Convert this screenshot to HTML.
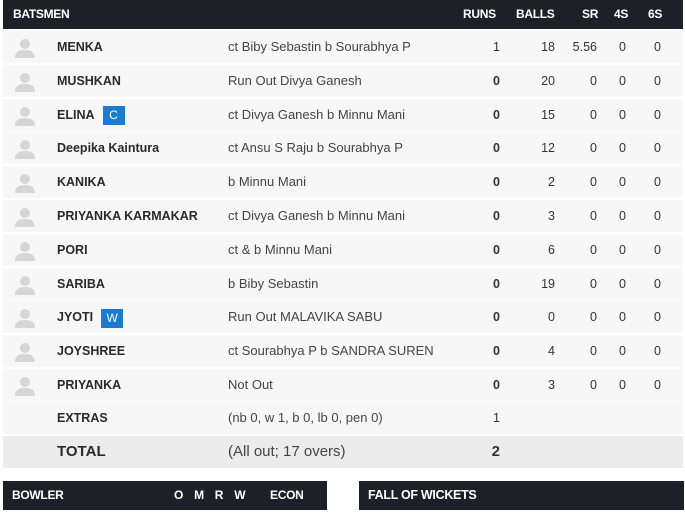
<!DOCTYPE html>
<html><head><style>
body{margin:0;width:685px;height:514px;background:#fff;font-family:"Liberation Sans",sans-serif;position:relative;overflow:hidden}
.hd{position:absolute;background:#1d2026;color:#fff;font-weight:bold;font-size:12px;height:29px;line-height:29px;letter-spacing:-0.3px}
.row{position:absolute;left:3px;width:680px;height:32px;background:#f7f7f7;font-size:12.5px;color:#333}
.row span{position:absolute;top:0;line-height:32px}
.nm{left:54px;font-weight:bold;color:#2a2a2a}
.ds{left:225px;color:#444;font-size:13px}
.r{text-align:right}
.badge{display:inline-block;color:#fff;background:#1a7bd1;font-weight:normal;font-size:12px;width:22px;height:19px;line-height:19px;text-align:center;margin-left:8px;vertical-align:middle}
.av{position:absolute;left:11px;top:7px;width:22px;height:20px}
</style></head><body>
<div class="hd" style="left:3px;top:0;width:680px">
<span style="position:absolute;left:10px">BATSMEN</span>
<span style="position:absolute;left:460px">RUNS</span>
<span style="position:absolute;left:513px">BALLS</span>
<span style="position:absolute;left:579px">SR</span>
<span style="position:absolute;left:611px">4S</span>
<span style="position:absolute;left:645px">6S</span>
</div>
<div id="rows"></div>
<script>
var d=[["MENKA","ct Biby Sebastin b Sourabhya P","1","18","5.56"],["MUSHKAN","Run Out Divya Ganesh","0","20","0"],["ELINA|C","ct Divya Ganesh b Minnu Mani","0","15","0"],["Deepika Kaintura","ct Ansu S Raju b Sourabhya P","0","12","0"],["KANIKA","b Minnu Mani","0","2","0"],["PRIYANKA KARMAKAR","ct Divya Ganesh b Minnu Mani","0","3","0"],["PORI","ct &amp; b Minnu Mani","0","6","0"],["SARIBA","b Biby Sebastin","0","19","0"],["JYOTI|W","Run Out MALAVIKA SABU","0","0","0"],["JOYSHREE","ct Sourabhya P b SANDRA SUREN","0","4","0"],["PRIYANKA","Not Out","0","3","0"]];
var h="";
for(var i=0;i<d.length;i++){var t=31+i*33.8;var n=d[i][0].split("|");
var nm=n[0]+(n[1]?'<span class="badge" style="position:static;line-height:19px">'+n[1]+'</span>':'');
h+='<div class="row" style="top:'+t+'px"><svg class="av" viewBox="0 0 22 20"><circle cx="11" cy="6" r="5" fill="#d6d6d6"/><path d="M1 20c0-6 4-8 10-8s10 2 10 8z" fill="#d6d6d6"/></svg>'+
'<span class="nm">'+nm+'</span><span class="ds">'+d[i][1]+'</span>'+
'<span class="r" style="left:470px;width:27px;font-weight:'+(d[i][2]=="0"?"bold":"normal")+'">'+d[i][2]+'</span>'+
'<span class="r" style="left:520px;width:32px">'+d[i][3]+'</span>'+
'<span class="r" style="left:560px;width:34px">'+d[i][4]+'</span>'+
'<span class="r" style="left:600px;width:23px">0</span>'+
'<span class="r" style="left:640px;width:18px">0</span></div>';}
document.getElementById("rows").innerHTML=h;
</script>
<div class="row" style="top:402px;font-size:12.5px"><span class="nm" style="left:54px">EXTRAS</span><span class="ds">(nb 0, w 1, b 0, lb 0, pen 0)</span><span class="r" style="left:470px;width:27px">1</span></div>
<div class="row" style="top:436px;background:#ececec;font-size:15px"><span class="nm" style="left:54px">TOTAL</span><span class="ds" style="font-size:15px">(All out; 17 overs)</span><span class="r" style="left:470px;width:27px;font-weight:bold">2</span></div>
<div class="hd" style="left:3px;top:481px;width:324px">
<span style="position:absolute;left:9px">BOWLER</span>
<span style="position:absolute;left:171px;word-spacing:8px">O M R W</span>
<span style="position:absolute;left:267px">ECON</span>
</div>
<div class="hd" style="left:359px;top:481px;width:325px;font-size:12.5px">
<span style="position:absolute;left:9px">FALL OF WICKETS</span>
</div>
</body></html>
